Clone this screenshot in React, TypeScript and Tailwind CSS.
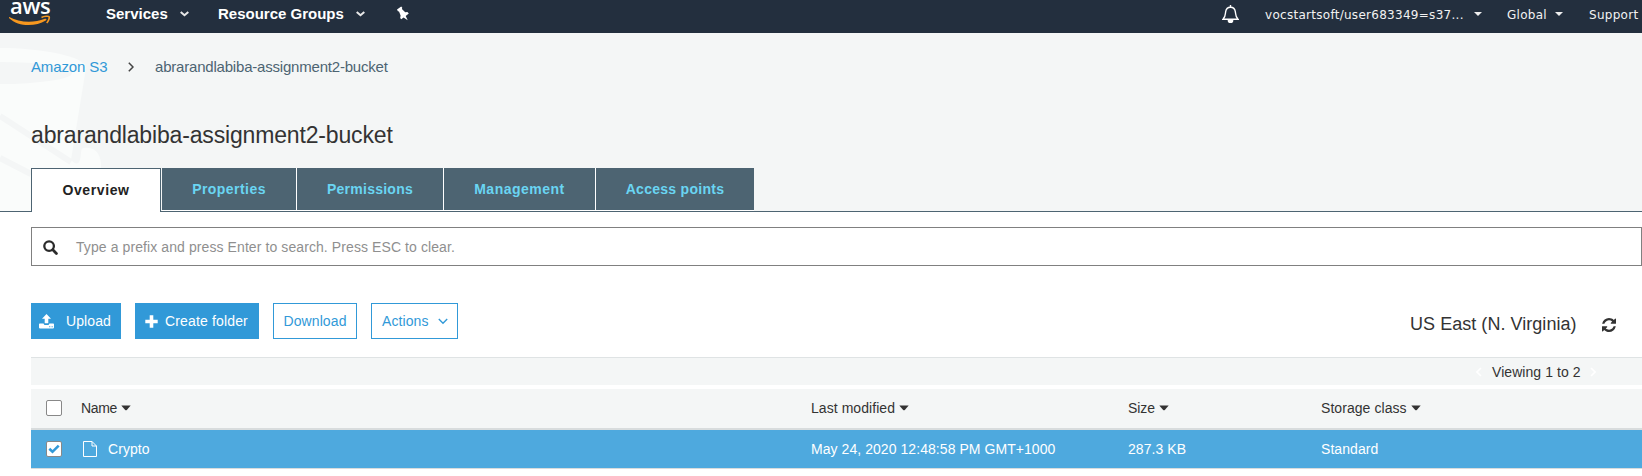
import React from "react";

function Caret() {
  return (
    <svg width="10" height="6" viewBox="0 0 10 6" fill="currentColor">
      <path d="M0.3 0.5h9.4L5.8 4.9Q5 5.7 4.200 4.900Z" />
    </svg>
  );
}

function NavChevron() {
  return (
    <svg width="9" height="6" viewBox="0 0 9 6" fill="none" stroke="#e8e8e8" strokeWidth="2">
      <path d="M0.7 0.9L4.5 4.2L8.3 0.9" />
    </svg>
  );
}

function SmallCaret() {
  return (
    <svg width="8" height="4" viewBox="0 0 8 4" fill="#eee">
      <path d="M0 0h8L4 4Z" />
    </svg>
  );
}

function SearchIcon() {
  return (
    <svg width="15" height="15" viewBox="0 0 15 15" fill="none" stroke="#2b2b2b" strokeWidth="2.3">
      <circle cx="6.1" cy="6.1" r="4.8" />
      <path d="M9.8 9.8L13.4 13.4" strokeWidth="2.8" strokeLinecap="round" />
    </svg>
  );
}

function UploadIcon() {
  return (
    <svg width="15" height="15" viewBox="0 0 15 15" fill="#fff">
      <path d="M7.5 0L12 4.8H9.3V9.3H5.7V4.8H3Z" />
      <path
        fillRule="evenodd"
        d="M0.8 9.5H4.6Q5 11 6 11H9Q10 11 10.4 9.5H14.2Q15 9.5 15 10.3V13.6Q15 14.4 14.2 14.4H0.8Q0 14.4 0 13.6V10.3Q0 9.5 0.8 9.5ZM10.2 12.2V13.3H11.3V12.2ZM12.6 12.2V13.3H13.7V12.2Z"
      />
    </svg>
  );
}

function PlusIcon() {
  return (
    <svg width="13" height="13" viewBox="0 0 13 13" stroke="#fff" strokeWidth="3.6">
      <path d="M6.5 0.3V12.7M0.3 6.5H12.7" />
    </svg>
  );
}

function RefreshIcon() {
  return (
    <svg className="mr-[26px]" width="14" height="14" viewBox="0 128 1536 1536" fill="currentColor">
      <path d="M1511 1056q0 5-1 7-64 268-268 434.500t-478 166.500q-146 0-282.500-55t-243.500-157l-129 129q-19 19-45 19t-45-19-19-45v-448q0-26 19-45t45-19h448q26 0 45 19t19 45-19 45l-137 137q71 66 161 102t187 36q134 0 250-65t186-179q11-17 53-117 8-23 30-23h192q13 0 22.500 9.500t9.500 22.500zm25-800v448q0 26-19 45t-45 19h-448q-26 0-45-19t-19-45 19-45l138-138q-148-137-349-137-134 0-250 65t-186 179q-11 17-53 117-8 23-30 23h-199q-13 0-22.500-9.500t-9.500-22.500v-7q65-268 270-434.500t480-166.500q146 0 284 55.500t245 156.500l130-129q19-19 45-19t45 19 19 45z" />
    </svg>
  );
}

function AwsLogo() {
  return (
    <div className="relative h-[33px] w-[42px]">
      <span className="absolute left-[1px] top-0 text-[22px] leading-[10px] tracking-[-0.3px] text-white font-['Open_Sans',sans-serif] font-semibold">
        aws
      </span>
      <svg className="absolute left-0 top-[15px]" width="42" height="12" viewBox="0 0 42 12" fill="#f7981f">
        <path d="M0.3 2C10 7.500 24 8.600 36 3.800C37.300 3.300 38 4.600 36.800 5.400C26 12.200 9 11.600 0.200 3.200C-0.200 2.600 0 1.800 0.300 2Z" />
        <path d="M32.500 2.400C35 1.200 39.700 0.800 40.200 1.800C40.700 3 39.300 6.400 37.700 8" fill="none" stroke="#f7981f" strokeWidth="1.700" />
      </svg>
    </div>
  );
}

function Header() {
  return (
    <header className="flex h-[33px] items-center bg-[#232f3e] text-white">
      <div className="w-[106px] pl-[9px]">
        <AwsLogo />
      </div>
      <div className="flex w-[112px] items-center gap-3 pb-[5px] text-[15px] font-bold leading-5">
        <span>Services</span>
        <NavChevron />
      </div>
      <div className="flex w-[178px] items-center gap-3 pb-[5px] text-[15px] font-bold leading-5">
        <span>Resource Groups</span>
        <NavChevron />
      </div>
      <svg className="mb-[7px]" width="14" height="15" viewBox="0 0 14 15" fill="#fff">
        <path d="M1 3.6L5.2 0.5L6.3 1.8L5.9 3L9.2 6.2L11.4 6L12.8 7.4L9.7 10L11.7 14.2L7.6 11.4L5.2 13.2L4.2 12L4.6 9.6L3 5.6L1.9 5.2Z" />
      </svg>
      <div className="ml-auto flex items-center pb-[5px] font-['DejaVu_Sans',sans-serif] text-[12px] leading-5 tracking-[0.28px] text-[#f2f2f2]">
        <svg className="mb-px mr-[26px]" width="17" height="18" viewBox="0 0 17 18" fill="none" stroke="#fff" strokeWidth="1.4">
          <path d="M1 14.200C3.400 12 3.300 10 3.600 7C4 4.200 5.600 2.200 8.500 2.200S13 4.200 13.400 7C13.700 10 13.600 12 16 14.200Z" />
          <path d="M8.500 0v2" />
          <path d="M6.400 15.400a2.100 1.900 0 0 0 4.200 0Z" fill="#fff" />
        </svg>
        <span className="w-[209px] pt-px">vocstartsoft/user683349=s37...</span>
        <SmallCaret />
        <span className="ml-[25px] w-[48px] pt-px">Global</span>
        <SmallCaret />
        <span className="ml-[26px] w-[53px] pt-px">Support</span>
      </div>
    </header>
  );
}

const tabs = [
  { label: "Properties", style: "w-[134px] tracking-[0.45px]" },
  { label: "Permissions", style: "w-[146px] tracking-[0.25px]" },
  { label: "Management", style: "w-[151px] tracking-[0.5px]" },
  { label: "Access points", style: "w-[158px] tracking-[0.28px]" },
];

function BucketHeading() {
  return (
    <section className="relative h-[179px] bg-[#f4f6f6]">
      <svg className="absolute left-0 top-0" width="110" height="178" viewBox="0 33 110 178">
        <path d="M0 48C40 48 86 56 86 68L71 160C74 163 78 166 80 160C82 152 80 148 84 148C96 146 102 156 101 168V211H0Z" fill="#fafcfb" />
        <ellipse cx="0" cy="73" rx="72" ry="11" fill="#f4f6f6" />
        <path d="M0 116L71 162M0 158L31 174" stroke="#f4f6f6" strokeWidth="6" />
      </svg>
      <div className="relative flex h-full flex-col pl-[31px]">
        <nav className="mt-6 flex h-5 items-center text-[15px] leading-5">
          <a className="w-[97px] tracking-[-0.13px] text-[#3199d8]">Amazon S3</a>
          <svg width="6" height="10" viewBox="0 0 6 10" fill="none" stroke="#444" strokeWidth="1.5">
            <path d="M0.8 0.8L5 5L0.8 9.2" />
          </svg>
          <span className="ml-[21px] tracking-[-0.2px] text-[#4d6472]">abrarandlabiba-assignment2-bucket</span>
        </nav>
        <h1 className="mt-[44px] text-[23px] leading-7 tracking-[-0.16px] text-[#333]">abrarandlabiba-assignment2-bucket</h1>
      </div>
    </section>
  );
}

function Tabs() {
  return (
    <div className="relative -mt-[44px] flex h-[44px] text-[14px] font-bold">
      <div className="w-[31px] border-b border-[#4d6472]" />
      <div className="flex w-[130px] items-center justify-center border-x border-t border-[#4d6472] bg-white tracking-[0.6px] text-[#222]">
        Overview
      </div>
      <div className="flex flex-1 border-b border-[#4d6472] pl-px text-[#6ad5f2]">
        <div className="flex gap-px border-b border-white bg-white">
          {tabs.map((t) => (
            <div key={t.label} className={`${t.style} flex items-center justify-center bg-[#4d6472]`}>
              {t.label}
            </div>
          ))}
        </div>
      </div>
    </div>
  );
}

function Toolbar() {
  return (
    <div className="mt-[37px] flex h-9 gap-[14px] text-[14px] tracking-[0.1px]">
      <button className="flex w-[90px] items-center bg-[#3199d8] pl-[8px] text-white">
        <UploadIcon />
        <span className="ml-[12px]">Upload</span>
      </button>
      <button className="flex w-[124px] items-center bg-[#3199d8] pl-[10px] tracking-[0.15px] text-white">
        <PlusIcon />
        <span className="ml-[7px]">Create folder</span>
      </button>
      <button className="w-[84px] border border-[#3199d8] text-[#3199d8]">Download</button>
      <button className="flex w-[87px] items-center border border-[#3199d8] pl-[10px] text-[#3199d8]">
        Actions
        <svg className="ml-[9px]" width="10" height="7" viewBox="0 0 10 7" fill="none" stroke="currentColor" strokeWidth="1.4">
          <path d="M0.8 1L5 5.2L9.2 1" />
        </svg>
      </button>
      <div className="ml-auto flex items-center pt-[7px] text-[#333]">
        <span className="w-[192px] text-[18px] tracking-[0.04px]">US East (N. Virginia)</span>
        <RefreshIcon />
      </div>
    </div>
  );
}

const columns = "grid grid-cols-[15px_35px_730px_317px_193px_1fr] items-center";

function ObjectTable() {
  return (
    <div className="mt-[18px] text-[14px] leading-5 tracking-[0.06px] text-[#333]">
      <div className="flex h-7 items-center justify-end border-t border-[#dfe3e4] bg-[#f4f6f6] pr-[46px]">
        <svg width="6" height="10" viewBox="0 0 6 10" fill="none" stroke="#fff" strokeWidth="1.6">
          <path d="M5 1L1 5L5 9" />
        </svg>
        <span className="ml-[10px] w-[98px]">Viewing 1 to 2</span>
        <svg width="6" height="10" viewBox="0 0 6 10" fill="none" stroke="#fff" strokeWidth="1.6">
          <path d="M1 1L5 5L1 9" />
        </svg>
      </div>
      <div className={`${columns} mt-1 h-[41px] border-b-2 border-[#d8dcdd] bg-[#f4f6f6] pb-[2px]`}>
        <span />
        <span className="mt-px size-4 rounded-[2px] border border-[#888] bg-white" />
        <span className="flex items-center gap-[4px] tracking-[-0.35px]">Name <Caret /></span>
        <span className="flex items-center gap-[4px]">Last modified <Caret /></span>
        <span className="flex items-center gap-[4px] tracking-[-0.1px]">Size <Caret /></span>
        <span className="flex items-center gap-[4px]">Storage class <Caret /></span>
      </div>
      <div className={`${columns} h-[39px] border-b border-[#d8dcdd] bg-[#4ea9de] text-white`}>
        <span />
        <span className="flex size-4 items-center justify-center rounded-[2px] border border-[#888] bg-white">
          <svg width="12" height="10" viewBox="0 0 12 10" fill="none" stroke="#3199d8" strokeWidth="2.6">
            <path d="M1.3 4.800L4.500 7.800L10.700 1.600" />
          </svg>
        </span>
        <span className="flex items-center">
          <svg className="ml-[2px] mr-[11px]" width="14" height="16" viewBox="0 0 14 16" fill="none" stroke="#fff">
            <path d="M0.5 0.500H9L13.500 5V15.500H0.500ZM9 0.500V5H13.500" />
          </svg>
          Crypto
        </span>
        <span>May 24, 2020 12:48:58 PM GMT+1000</span>
        <span>287.3 KB</span>
        <span>Standard</span>
      </div>
    </div>
  );
}

export default function App() {
  return (
    <div className="h-[476px] w-[1642px] overflow-hidden bg-white font-['Liberation_Sans',Arial,sans-serif]">
      <Header />
      <BucketHeading />
      <Tabs />
      <main className="pl-[31px] pt-[15px]">
        <div className="flex h-[39px] items-center gap-[18px] border border-[#808080] pl-[11px] pt-px text-[14px] tracking-[0.09px] text-[#8f8f8f]">
          <SearchIcon />
          <span>Type a prefix and press Enter to search. Press ESC to clear.</span>
        </div>
        <Toolbar />
        <ObjectTable />
      </main>
    </div>
  );
}
